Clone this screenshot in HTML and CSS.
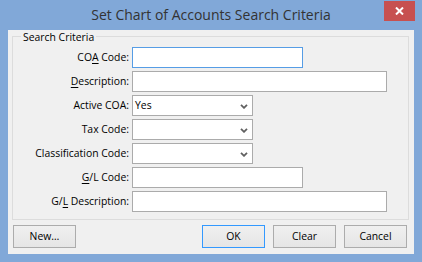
FILE: index.html
```
<!DOCTYPE html>
<html>
<head>
<meta charset="utf-8">
<link rel="stylesheet" href="styles.css">
</head>
<body>
<div class="window">
  <div class="titlebar">
    <div></div>
    <div class="title">Set Chart of Accounts Search Criteria</div>
    <div class="close">
      <svg width="9" height="8" viewBox="0 0 9 8"><path d="M1 0.5 L8 7.5 M8 0.5 L1 7.5" stroke="#fff" stroke-width="2" fill="none"/></svg>
    </div>
  </div>
  <div class="client">
    <div class="group">
      <div class="legend">Search Criteria</div>
      <div class="form">
        <div class="lbl">CO<u>A</u> Code:</div>
        <div class="field w-mid focus"></div>
        <div class="lbl"><u>D</u>escription:</div>
        <div class="field w-long"></div>
        <div class="lbl">Active COA:</div>
        <div class="field w-sel combo"><span>Yes</span><svg class="chev" width="8" height="5" viewBox="0 0 8 5"><polyline points="1,0.8 4,3.8 7,0.8" fill="none" stroke="#606060" stroke-width="1.8"/></svg></div>
        <div class="lbl">Tax Code:</div>
        <div class="field w-sel combo"><span></span><svg class="chev" width="8" height="5" viewBox="0 0 8 5"><polyline points="1,0.8 4,3.8 7,0.8" fill="none" stroke="#606060" stroke-width="1.8"/></svg></div>
        <div class="lbl">Classification Code:</div>
        <div class="field w-sel combo"><span></span><svg class="chev" width="8" height="5" viewBox="0 0 8 5"><polyline points="1,0.8 4,3.8 7,0.8" fill="none" stroke="#606060" stroke-width="1.8"/></svg></div>
        <div class="lbl"><u>G</u>/L Code:</div>
        <div class="field w-mid"></div>
        <div class="lbl">G/<u>L</u> Description:</div>
        <div class="field w-long"></div>
      </div>
    </div>
    <div class="buttons">
      <div class="btn">New…</div>
      <div class="btn default push">OK</div>
      <div class="btn">Clear</div>
      <div class="btn">Cancel</div>
    </div>
  </div>
</div>
</body>
</html>
```
FILE: styles.css
```
* { box-sizing: border-box; }
html, body { margin: 0; padding: 0; }
body {
  width: 422px;
  height: 262px;
  overflow: hidden;
  background: #81a8d8;
  font-family: "Open Sans", "Noto Sans", sans-serif;
  font-size: 10.4px;
  color: #000;
}
.window {
  display: flex;
  flex-direction: column;
  width: 422px;
  height: 262px;
}
.titlebar {
  height: 30px;
  flex: none;
  display: grid;
  grid-template-columns: 1fr auto 1fr;
}
.title {
  font-size: 14px;
  line-height: 30px;
  color: #333;
  white-space: nowrap;
}
.close {
  justify-self: end;
  align-self: start;
  margin: 1px 7px 0 0;
  width: 31px;
  height: 20px;
  background: #c75050;
  display: flex;
  align-items: center;
  justify-content: center;
}
.client {
  flex: 1;
  margin: 0 8px 8px 8px;
  background: #f0f0f0;
  display: flex;
  flex-direction: column;
}
.group {
  margin: 6px 5px 0 4px;
  border: 1px solid #dcdcdc;
  padding: 0 0 7px 0;
}
.legend {
  margin: -7px 0 0 8px;
  padding: 0 2px;
  width: max-content;
  background: #f0f0f0;
  line-height: 14px;
}
.form {
  margin-top: 3px;
  display: grid;
  grid-template-columns: 116px auto;
  column-gap: 3px;
  row-gap: 3px;
  justify-items: start;
  align-items: center;
}
.lbl {
  justify-self: end;
  line-height: 21px;
  white-space: nowrap;
}
.lbl u { text-decoration-thickness: 1px; text-underline-offset: 2px; }
.field {
  height: 21px;
  background: #fff;
  border: 1px solid #ababab;
}
.field.focus { border-color: #569de5; }
.w-mid { width: 171px; }
.w-long { width: 255px; }
.w-sel { width: 121px; }
.combo {
  display: flex;
  align-items: center;
  justify-content: space-between;
  padding: 0 4px 0 2px;
  line-height: 19px;
}
.chev { display: block; margin-top: 1px; }
.buttons {
  margin-top: 5px;
  padding: 0 7px 0 5px;
  display: flex;
  gap: 8px;
}
.btn {
  width: 63px;
  height: 23px;
  border: 1px solid #acacac;
  background: linear-gradient(#f0f0f0, #e5e5e5);
  display: flex;
  align-items: center;
  justify-content: center;
  line-height: 21px;
}
.btn.default { border-color: #3399ff; }
.push { margin-left: auto; }
```
